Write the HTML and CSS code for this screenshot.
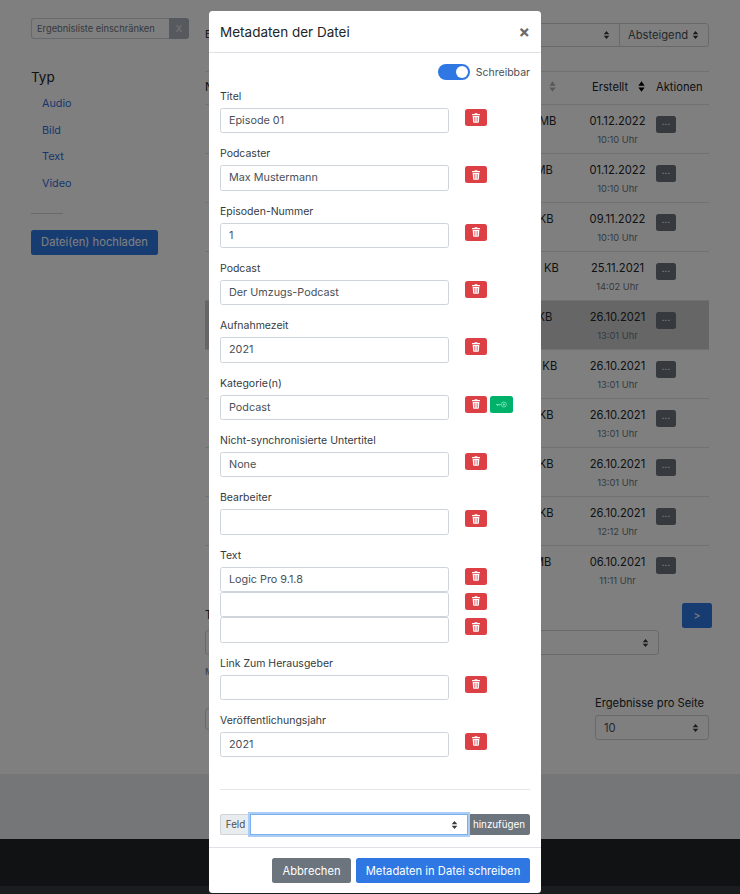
FILE: index.html
```html
<!DOCTYPE html>
<html lang="de">
<head>
<meta charset="utf-8">
<title>Metadaten der Datei</title>
<link rel="stylesheet" href="styles.css">
</head>
<body>
<svg class="defs" width="0" height="0" aria-hidden="true">
  <symbol id="trash" viewBox="0 0 12 14"><path fill="currentColor" d="M4.2 0h3.6l.5 1H11.5a.5.5 0 0 1 .5.5V3H0V1.5A.5.5 0 0 1 .5 1h3.2zM1 4h10l-.7 9.1a1 1 0 0 1-1 .9H2.700a1 1 0 0 1-1-.9zM3.500 5.500v7h.8v-7zm2.100 0v7h.8v-7zm2.100 0v7h.8v-7z"/></symbol>
  <symbol id="sort" viewBox="0 0 8 12"><path fill="currentColor" d="M4 0l3.600 5H.4zM4 12L.4 7h7.200z"/></symbol>
</svg>
<div class="page">
  <div class="content">
    <aside class="sidebar">
      <div class="search">
        <input class="search-input" type="text" placeholder="Ergebnisliste einschränken">
        <button class="search-clear">X</button>
      </div>
      <h3 class="facet-title">Typ</h3>
      <ul class="facet-list">
        <li><a href="#">Audio</a></li>
        <li><a href="#">Bild</a></li>
        <li><a href="#">Text</a></li>
        <li><a href="#">Video</a></li>
      </ul>
      <hr class="side-rule">
      <button class="btn-primary upload">Datei(en) hochladen</button>
    </aside>
    <main class="main">
      <div class="toolbar">
        <span class="toolbar-label">Ergebnisse sortieren</span>
        <div class="sort-group">
          <select class="select sort-field"><option>Erstellt</option></select>
          <select class="select sort-order"><option>Absteigend</option></select>
        </div>
      </div>
      <div class="table">
        <div class="row head">
          <div>Name</div>
          <div class="cell-size">Größe <svg class="sort-icon"><use href="#sort"/></svg></div>
          <div class="cell-date">Erstellt <svg class="sort-icon active"><use href="#sort"/></svg></div>
          <div>Aktionen</div>
        </div>
        <div class="row"><div></div><div class="cell-size">13.24 MB</div><div class="cell-date">01.12.2022<small>10:10 Uhr</small></div><div><button class="more">...</button></div></div>
        <div class="row"><div></div><div class="cell-size">12.5 MB</div><div class="cell-date">01.12.2022<small>10:10 Uhr</small></div><div><button class="more">...</button></div></div>
        <div class="row"><div></div><div class="cell-size">13.71 KB</div><div class="cell-date">09.11.2022<small>10:10 Uhr</small></div><div><button class="more">...</button></div></div>
        <div class="row"><div></div><div class="cell-size">104.04 KB</div><div class="cell-date">25.11.2021<small>14:02 Uhr</small></div><div><button class="more">...</button></div></div>
        <div class="row selected"><div></div><div class="cell-size">112.1 KB</div><div class="cell-date">26.10.2021<small>13:01 Uhr</small></div><div><button class="more">...</button></div></div>
        <div class="row"><div></div><div class="cell-size">113.62 KB</div><div class="cell-date">26.10.2021<small>13:01 Uhr</small></div><div><button class="more">...</button></div></div>
        <div class="row"><div></div><div class="cell-size">11.97 KB</div><div class="cell-date">26.10.2021<small>13:01 Uhr</small></div><div><button class="more">...</button></div></div>
        <div class="row"><div></div><div class="cell-size">11.97 KB</div><div class="cell-date">26.10.2021<small>13:01 Uhr</small></div><div><button class="more">...</button></div></div>
        <div class="row"><div></div><div class="cell-size">11.97 KB</div><div class="cell-date">26.10.2021<small>12:12 Uhr</small></div><div><button class="more">...</button></div></div>
        <div class="row last"><div></div><div class="cell-size">12.1 MB</div><div class="cell-date">06.10.2021<small>11:11 Uhr</small></div><div><button class="more">...</button></div></div>
      </div>
      <div class="bulk">
        <div class="bulk-field">
          <label class="bulk-label">Tags</label>
          <select class="select bulk-select"><option></option></select>
        </div>
        <button class="btn-primary next">&gt;</button>
      </div>
      <p class="bulk-hint">Mehrere Dateien mit gedrückter Taste auswählen.</p>
      <div class="per-page-row">
        <div class="left-box"></div>
        <div class="per-page">
          <label class="per-page-label">Ergebnisse pro Seite</label>
          <select class="select per-page-select"><option>10</option></select>
        </div>
      </div>
    </main>
  </div>
  <footer class="footer-light"></footer>
  <footer class="footer-dark"></footer>
  <footer class="footer-bottom"></footer>
</div>

<div class="backdrop"></div>

<section class="modal">
  <header class="modal-head">
    <h2 class="modal-title">Metadaten der Datei</h2>
    <button class="close">×</button>
  </header>
  <div class="modal-body">
    <div class="switch-row">
      <span class="switch"><span class="knob"></span></span>
      <span>Schreibbar</span>
    </div>

    <div class="field">
      <label>Titel</label>
      <div class="line"><input class="input" value="Episode 01"><button class="del"><svg class="trash"><use href="#trash"/></svg></button></div>
    </div>
    <div class="field">
      <label>Podcaster</label>
      <div class="line"><input class="input" value="Max Mustermann"><button class="del"><svg class="trash"><use href="#trash"/></svg></button></div>
    </div>
    <div class="field">
      <label>Episoden-Nummer</label>
      <div class="line"><input class="input" value="1"><button class="del"><svg class="trash"><use href="#trash"/></svg></button></div>
    </div>
    <div class="field">
      <label>Podcast</label>
      <div class="line"><input class="input" value="Der Umzugs-Podcast"><button class="del"><svg class="trash"><use href="#trash"/></svg></button></div>
    </div>
    <div class="field">
      <label>Aufnahmezeit</label>
      <div class="line"><input class="input" value="2021"><button class="del"><svg class="trash"><use href="#trash"/></svg></button></div>
    </div>
    <div class="field">
      <label>Kategorie(n)</label>
      <div class="line"><input class="input" value="Podcast"><button class="del"><svg class="trash"><use href="#trash"/></svg></button><button class="key"><svg class="key-icon" viewBox="0 0 14 8"><path fill="none" stroke="currentColor" d="M0 4h6M2 4v2M4 4v1.500"/><circle cx="10" cy="4" r="3.200" fill="none" stroke="currentColor"/><circle cx="10" cy="4" r="1.200" fill="currentColor"/></svg></button></div>
    </div>
    <div class="field">
      <label>Nicht-synchronisierte Untertitel</label>
      <div class="line"><input class="input" value="None"><button class="del"><svg class="trash"><use href="#trash"/></svg></button></div>
    </div>
    <div class="field">
      <label>Bearbeiter</label>
      <div class="line"><input class="input" value=""><button class="del"><svg class="trash"><use href="#trash"/></svg></button></div>
    </div>
    <div class="field">
      <label>Text</label>
      <div class="line"><input class="input" value="Logic Pro 9.1.8"><button class="del"><svg class="trash"><use href="#trash"/></svg></button></div>
      <div class="line"><input class="input" value=""><button class="del"><svg class="trash"><use href="#trash"/></svg></button></div>
      <div class="line"><input class="input" value=""><button class="del"><svg class="trash"><use href="#trash"/></svg></button></div>
    </div>
    <div class="field">
      <label>Link Zum Herausgeber</label>
      <div class="line"><input class="input" value=""><button class="del"><svg class="trash"><use href="#trash"/></svg></button></div>
    </div>
    <div class="field">
      <label>Veröffentlichungsjahr</label>
      <div class="line"><input class="input" value="2021"><button class="del"><svg class="trash"><use href="#trash"/></svg></button></div>
    </div>

    <hr class="modal-rule">

    <div class="add-group">
      <span class="add-label">Feld</span>
      <select class="select add-select"><option></option></select>
      <button class="add-btn">hinzufügen</button>
    </div>
  </div>
  <footer class="modal-foot">
    <button class="btn-cancel">Abbrechen</button>
    <button class="btn-write">Metadaten in Datei schreiben</button>
  </footer>
</section>
</body>
</html>
```
FILE: styles.css
```css
* { box-sizing: border-box; }
html, body { margin: 0; padding: 0; height: 894px; overflow: hidden; }
body { font-family: Inter, "Noto Sans", "Liberation Sans", sans-serif; font-size: 11.2px; color: #212529; background: #fff; }
button { font-family: inherit; cursor: pointer; }
.defs { position: absolute; }

.page { height: 894px; display: flex; flex-direction: column; overflow: hidden; }
.content { height: 774px; display: flex; flex: none; }
.sidebar { width: 205px; flex: none; padding: 18px 16px 0 31px; }
.search { display: flex; width: 158px; height: 21px; }
.search-input { flex: 1; min-width: 0; border: 1px solid #ced4da; border-right: 0; border-radius: 3px 0 0 3px; padding: 0 5px; font: 9.3px Inter, sans-serif; background: #fff; }
.search-input::placeholder { color: #6c757d; opacity: 1; }
.search-clear { width: 20px; border: 0; background: #adb5bd; color: #e9ecef; border-radius: 0 3px 3px 0; font-size: 9.5px; padding: 0; }
.facet-title { margin: 29px 0 0; font-size: 13.5px; line-height: 18px; font-weight: 400; color: #212529; }
.facet-list { list-style: none; margin: 9px 0 0; padding: 0 0 0 11px; }
.facet-list li { height: 26.700px; line-height: 17px; font-size: 10.8px; }
.facet-list a { color: #2f6fdc; text-decoration: none; }
.side-rule { width: 32px; margin: 11px 0 16px; border: 0; border-top: 1px solid #ced4da; }
.btn-primary { background: #2f78e4; color: #fff; border: 0; border-radius: 2.500px; }
.upload { width: 127px; height: 25px; font-size: 11.2px; padding: 0; }

.main { width: 504px; flex: none; }
.toolbar { height: 71px; padding-top: 23px; display: flex; justify-content: space-between; align-items: flex-start; }
.toolbar-label { line-height: 23px; font-size: 10.5px; }
.sort-group { display: flex; }
.select { appearance: none; -webkit-appearance: none; font: 11.2px Inter, sans-serif; color: #495057; background: #fff url("data:image/svg+xml,%3Csvg xmlns='http://www.w3.org/2000/svg' viewBox='0 0 8 10'%3E%3Cpath fill='%23343a40' d='M4 0l3.500 4H.5zM4 10L.5 6h7z'/%3E%3C/svg%3E") no-repeat right 9px center / 7px 8px; border: 1px solid #ced4da; border-radius: 3px; padding: 0 8px; }
.sort-field { width: 140px; height: 24px; border-radius: 3px 0 0 3px; }
.sort-order { width: 90px; height: 24px; border-radius: 0 3px 3px 0; margin-left: -1px; }

.table { border-top: 1px solid #dee2e6; }
.row { display: grid; grid-template-columns: 280px 94px 77px 1fr; height: 49px; border-bottom: 1px solid #dee2e6; padding-top: 9px; line-height: 15px; }
.row > div:last-child { padding-left: 0; }
.row.head { height: 33px; padding-top: 8px; }
.row.last { border-bottom: 0; }
.row.selected { background: #ccc; }
.cell-size { text-align: center; white-space: nowrap; }
.cell-date { text-align: center; white-space: nowrap; }
.cell-date small { display: block; font-size: 9.3px; color: #6c757d; margin-top: 5px; line-height: 12px; }
.head .cell-size { text-align: right; padding-right: 23px; position: relative; }
.head .cell-date { text-align: left; padding-left: 13px; }
.sort-icon { width: 7px; height: 11px; margin-left: 7px; vertical-align: -1px; color: #adb5bd; }
.sort-icon.active { color: #000; }
.more { width: 20px; height: 17px; background: #6c757d; color: #fff; border: 0; border-radius: 2.500px; padding: 0 0 4px; font-size: 9px; line-height: 10px; letter-spacing: .3px; }

.bulk { display: flex; justify-content: space-between; align-items: flex-start; margin: 8px -3px 0 0; }
.bulk-label { display: block; line-height: 16px; margin-bottom: 7px; margin-top: 4px; }
.bulk-select { display: block; width: 454px; height: 25px; }
.next { width: 30px; height: 25px; font-size: 11px; padding: 0; }
.bulk-hint { margin: 11px 0 0; font-size: 9.3px; line-height: 12px; color: #6c757d; }
.per-page-row { display: flex; justify-content: space-between; margin-top: 17px; align-items: flex-start; }
.left-box { width: 100px; height: 22px; margin-top: 13px; border: 1px solid #ced4da; border-radius: 3px; }
.per-page-label { display: block; line-height: 16px; margin-bottom: 4px; }
.per-page-select { display: block; width: 114px; height: 25px; }

.footer-light { height: 65px; flex: none; background: #e9ecef; }
.footer-dark { height: 47px; flex: none; background: #212529; }
.footer-bottom { flex: 1; background: #343a40; }

.backdrop { position: fixed; inset: 0; background: rgba(0, 0, 0, .5); }

.modal { position: fixed; left: 209px; top: 11px; width: 332px; height: 882px; background: #fff; border-radius: 3.500px; display: flex; flex-direction: column; color: #212529; }
.modal-head { height: 42px; flex: none; display: flex; align-items: center; justify-content: space-between; padding: 0 11px; border-bottom: 1px solid #dee2e6; }
.modal-title { margin: 0; font-size: 13.5px; font-weight: 400; line-height: 18px; }
.close { border: 0; background: none; padding: 0; color: #6b6b6b; font-size: 17px; font-weight: 700; line-height: 18px; }
.modal-body { flex: 1; padding: 11px 11px 0; }
.switch-row { display: flex; justify-content: flex-end; align-items: center; gap: 6px; height: 16px; font-size: 10.5px; color: #495057; margin-bottom: 8px; }
.switch { width: 32px; height: 16px; border-radius: 8px; background: #2f78e4; display: flex; justify-content: flex-end; padding: 2px; }
.knob { width: 12px; height: 12px; background: #fff; border-radius: 50%; }

.field { margin-bottom: 12px; }
.field label { display: block; height: 20px; line-height: 17px; font-size: 10.5px; color: #343a40; }
.line { display: flex; align-items: flex-start; height: 25.330px; }
.input { width: 229px; height: 100%; flex: none; border: 1px solid #ced4da; border-radius: 2.500px; padding: 0 8px; font: 10.8px Inter, sans-serif; color: #495057; background: #fff; outline: 0; }
.del { width: 22px; height: 17px; margin: 1px 0 0 16px; flex: none; border: 0; border-radius: 2.500px; background: #dc3f44; color: #fff; padding: 0; display: flex; align-items: center; justify-content: center; }
.trash { width: 8px; height: 10px; }
.key { width: 23px; height: 17px; margin: 1px 0 0 3px; flex: none; border: 0; border-radius: 2.500px; background: #00b16a; color: #8fe6c2; padding: 0; display: flex; align-items: center; justify-content: center; }
.key-icon { width: 11px; height: 7px; }

.modal-rule { margin: 32px 0 24px; border: 0; border-top: 1px solid #e5e8eb; }
.add-group { display: flex; height: 21px; }
.add-label { width: 30px; flex: none; background: #e9ecef; border: 1px solid #ced4da; border-right: 0; border-radius: 2.500px 0 0 2.500px; font-size: 9.8px; color: #495057; line-height: 20px; text-align: center; }
.add-select { flex: 1; min-width: 0; height: 21px; border: 1px solid #7ab0ee; border-radius: 0; box-shadow: 0 0 0 2px #a9cdf7; position: relative; }
.add-btn { width: 62px; flex: none; border: 0; background: #6c757d; color: #fff; border-radius: 0 2.500px 2.500px 0; font-size: 9.8px; padding: 0; }
.modal-foot { height: 46px; flex: none; border-top: 1px solid #dee2e6; display: flex; justify-content: flex-end; gap: 5px; padding: 10px 11px 0; }
.btn-cancel, .btn-write { height: 25px; border: 0; border-radius: 2.500px; color: #fff; font-size: 11.2px; padding: 0; }
.btn-cancel { width: 79px; background: #6c757d; }
.btn-write { width: 174px; background: #2f78e4; }
```
